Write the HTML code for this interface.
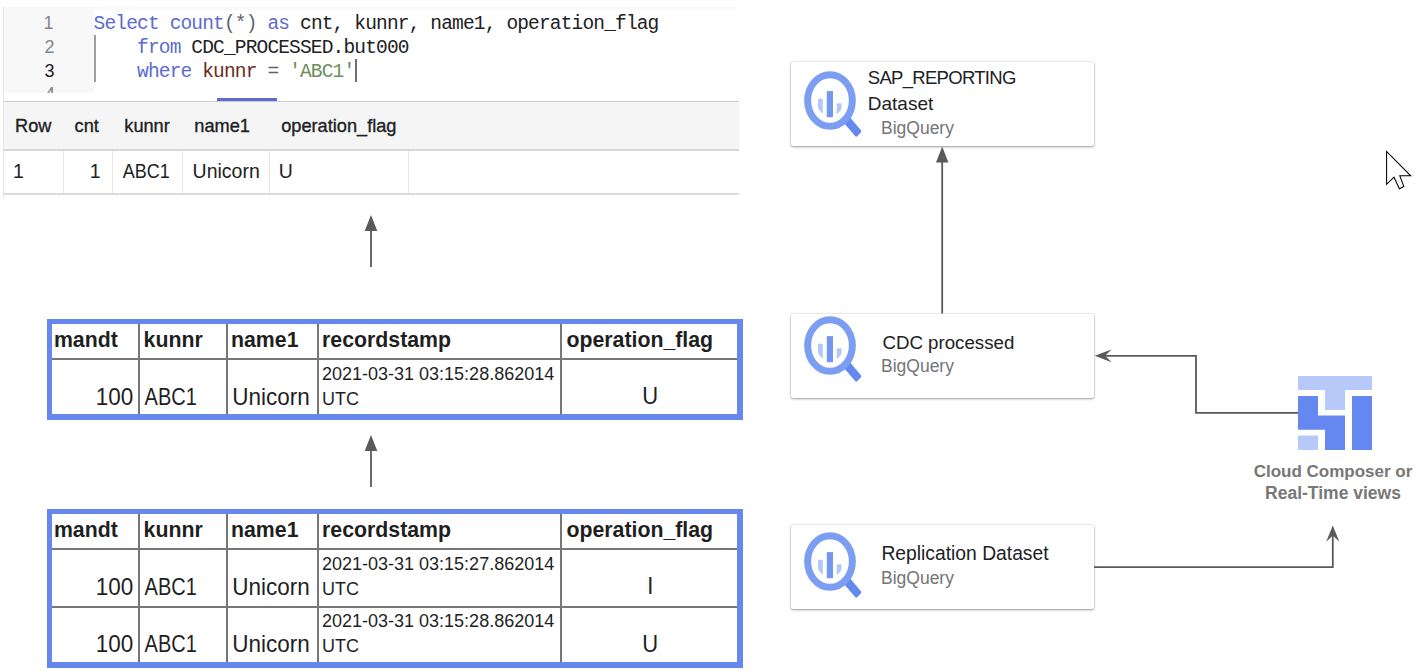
<!DOCTYPE html>
<html><head><meta charset="utf-8"><style>
html,body{margin:0;padding:0;background:#fff;width:1416px;height:671px;overflow:hidden;position:relative}
body>div,body>svg{position:absolute}
</style></head><body>
<div style="left:3px;top:7px;width:1px;height:191px;background:#e4e4e4;"></div>
<div style="left:4px;top:7px;width:90px;height:86px;background:#f8f8f8;"></div>
<div style="left:94px;top:7px;width:645px;height:3px;background:#fafafa;"></div>
<div style="left:23.6px;width:30px;text-align:right;top:11.66px;font-family:'Liberation Sans', sans-serif;font-size:18px;line-height:22px;color:#80868b;font-weight:400;white-space:pre;">1</div>
<div style="left:24.5px;width:30px;text-align:right;top:35.96px;font-family:'Liberation Sans', sans-serif;font-size:18px;line-height:22px;color:#80868b;font-weight:400;white-space:pre;">2</div>
<div style="left:24.5px;width:30px;text-align:right;top:59.76px;font-family:'Liberation Sans', sans-serif;font-size:18px;line-height:22px;color:#202124;font-weight:400;white-space:pre;">3</div>
<div style="left:25px;top:86px;width:30px;height:7px;overflow:hidden"><div style="position:absolute;left:0;top:-2.4px;width:30px;text-align:right;font-family:'Liberation Sans', sans-serif;font-size:18px;line-height:20px;color:#80868b">4</div></div>
<div style="left:94px;top:35px;width:2px;height:47px;background:#9e9e9e;"></div>
<div style="left:93.6px;top:13.01px;font-family:'Liberation Mono', monospace;font-size:19.5px;line-height:23px;color:#202124;font-weight:400;white-space:pre;letter-spacing:-0.84px"><span style="color:#5c6bd0">Select</span><span style="color:#202124"> </span><span style="color:#5c6bd0">count</span><span style="color:#5f6368">(*)</span><span style="color:#202124"> </span><span style="color:#5c6bd0">as</span><span style="color:#202124"> cnt, kunnr, name1, operation_flag</span></div>
<div style="left:93.6px;top:36.71px;font-family:'Liberation Mono', monospace;font-size:19.5px;line-height:23px;color:#202124;font-weight:400;white-space:pre;letter-spacing:-0.84px"><span style="color:#202124">    </span><span style="color:#5c6bd0">from</span><span style="color:#202124"> CDC_PROCESSED.but000</span></div>
<div style="left:93.6px;top:61.31px;font-family:'Liberation Mono', monospace;font-size:19.5px;line-height:23px;color:#202124;font-weight:400;white-space:pre;letter-spacing:-0.84px"><span style="color:#202124">    </span><span style="color:#5c6bd0">where</span><span style="color:#202124"> </span><span style="color:#6a2d1c">kunnr</span><span style="color:#5f6368"> = </span><span style="color:#6a8f5a">'ABC1'</span></div>
<div style="left:355px;top:59px;width:2px;height:23px;background:#6f6f6f;"></div>
<div style="left:217px;top:98px;width:60px;height:3px;background:#5c6bd0;"></div>
<div style="left:4px;top:101px;width:735px;height:1px;background:#cdcdcd;"></div>
<div style="left:4px;top:102px;width:735px;height:47px;background:#f5f5f5;"></div>
<div style="left:4px;top:149px;width:735px;height:2px;background:#d6d6d6;"></div>
<div style="left:4px;top:193px;width:735px;height:2px;background:#dcdcdc;"></div>
<div style="left:63px;top:151px;width:1px;height:42px;background:#e6e6e6;"></div>
<div style="left:112px;top:151px;width:1px;height:42px;background:#e6e6e6;"></div>
<div style="left:182px;top:151px;width:1px;height:42px;background:#e6e6e6;"></div>
<div style="left:269px;top:151px;width:1px;height:42px;background:#e6e6e6;"></div>
<div style="left:408px;top:151px;width:1px;height:42px;background:#e6e6e6;"></div>
<div style="left:15px;top:115.19px;font-family:'Liberation Sans', sans-serif;font-size:18.2px;line-height:22px;color:#202124;font-weight:400;white-space:pre;-webkit-text-stroke:0.35px #202124">Row</div>
<div style="left:74.6px;top:115.19px;font-family:'Liberation Sans', sans-serif;font-size:18.2px;line-height:22px;color:#202124;font-weight:400;white-space:pre;-webkit-text-stroke:0.35px #202124">cnt</div>
<div style="left:124.3px;top:115.19px;font-family:'Liberation Sans', sans-serif;font-size:18.2px;line-height:22px;color:#202124;font-weight:400;white-space:pre;-webkit-text-stroke:0.35px #202124">kunnr</div>
<div style="left:194.3px;top:115.19px;font-family:'Liberation Sans', sans-serif;font-size:18.2px;line-height:22px;color:#202124;font-weight:400;white-space:pre;-webkit-text-stroke:0.35px #202124">name1</div>
<div style="left:281.2px;top:115.19px;font-family:'Liberation Sans', sans-serif;font-size:18.2px;line-height:22px;color:#202124;font-weight:400;white-space:pre;-webkit-text-stroke:0.35px #202124">operation_flag</div>
<div style="left:13px;top:159.54px;font-family:'Liberation Sans', sans-serif;font-size:19.5px;line-height:23px;color:#202124;font-weight:400;white-space:pre;">1</div>
<div style="left:60.5px;width:40px;text-align:right;top:159.54px;font-family:'Liberation Sans', sans-serif;font-size:19.5px;line-height:23px;color:#202124;font-weight:400;white-space:pre;">1</div>
<div style="left:122.8px;top:160.56px;font-family:'Liberation Sans', sans-serif;font-size:18px;line-height:22px;color:#202124;font-weight:400;white-space:pre;transform:scaleY(1.1);transform-origin:0 17.24px;">ABC1</div>
<div style="left:192.6px;top:159.54px;font-family:'Liberation Sans', sans-serif;font-size:19.5px;line-height:23px;color:#202124;font-weight:400;white-space:pre;">Unicorn</div>
<div style="left:278.8px;top:159.54px;font-family:'Liberation Sans', sans-serif;font-size:19.5px;line-height:23px;color:#202124;font-weight:400;white-space:pre;">U</div>
<svg style="left:0;top:0" width="1416" height="671"><path d="M371 215 L364.7 231 L377.3 231 Z" fill="#595959"/><rect x="370.1" y="230" width="1.8" height="37" fill="#595959"/></svg>
<svg style="left:0;top:0" width="1416" height="671"><path d="M371 435 L364.7 451 L377.3 451 Z" fill="#595959"/><rect x="370.1" y="450" width="1.8" height="37" fill="#595959"/></svg>
<div style="left:137.5px;top:324px;width:2px;height:90px;background:#777777;"></div>
<div style="left:226px;top:324px;width:2px;height:90px;background:#777777;"></div>
<div style="left:316.5px;top:324px;width:2px;height:90px;background:#777777;"></div>
<div style="left:560px;top:324px;width:2px;height:90px;background:#777777;"></div>
<div style="left:52px;top:358px;width:686px;height:2px;background:#777777;"></div>
<div style="left:47px;top:319px;width:695.6px;height:5px;background:#6688ee;"></div>
<div style="left:47px;top:414px;width:695.6px;height:5.6px;background:#6688ee;"></div>
<div style="left:47px;top:319px;width:5px;height:100.6px;background:#6688ee;"></div>
<div style="left:737.2px;top:319px;width:5.4px;height:100.6px;background:#6688ee;"></div>
<div style="left:53.9px;top:326.62px;font-family:'Liberation Sans', sans-serif;font-size:21.3px;line-height:26px;color:#1f1f1f;font-weight:700;white-space:pre;">mandt</div>
<div style="left:143.6px;top:326.62px;font-family:'Liberation Sans', sans-serif;font-size:21.3px;line-height:26px;color:#1f1f1f;font-weight:700;white-space:pre;">kunnr</div>
<div style="left:231px;top:326.62px;font-family:'Liberation Sans', sans-serif;font-size:21.3px;line-height:26px;color:#1f1f1f;font-weight:700;white-space:pre;">name1</div>
<div style="left:322px;top:326.62px;font-family:'Liberation Sans', sans-serif;font-size:21.3px;line-height:26px;color:#1f1f1f;font-weight:700;white-space:pre;">recordstamp</div>
<div style="left:566.4px;top:326.62px;font-family:'Liberation Sans', sans-serif;font-size:21.3px;line-height:26px;color:#1f1f1f;font-weight:700;white-space:pre;">operation_flag</div>
<div style="left:53.19999999999999px;width:80px;text-align:right;top:383.70px;font-family:'Liberation Sans', sans-serif;font-size:22.5px;line-height:27px;color:#1f1f1f;font-weight:400;white-space:pre;transform:scaleY(1.08);transform-origin:0 21.30px;">100</div>
<div style="left:144.6px;top:386.07px;font-family:'Liberation Sans', sans-serif;font-size:20px;line-height:24px;color:#1f1f1f;font-weight:400;white-space:pre;transform:scaleY(1.16);transform-origin:0 18.93px;">ABC1</div>
<div style="left:232.3px;top:383.70px;font-family:'Liberation Sans', sans-serif;font-size:22.5px;line-height:27px;color:#1f1f1f;font-weight:400;white-space:pre;transform:scaleY(1.06);transform-origin:0 21.30px;">Unicorn</div>
<div style="left:322px;top:362.76px;font-family:'Liberation Sans', sans-serif;font-size:18px;line-height:22px;color:#1f1f1f;font-weight:400;white-space:pre;">2021-03-31 03:15:28.862014</div>
<div style="left:322px;top:387.76px;font-family:'Liberation Sans', sans-serif;font-size:18px;line-height:22px;color:#1f1f1f;font-weight:400;white-space:pre;">UTC</div>
<div style="left:600.3px;width:100px;text-align:center;top:384.37px;font-family:'Liberation Sans', sans-serif;font-size:22px;line-height:26px;color:#1f1f1f;font-weight:400;white-space:pre;transform:scaleY(1.08);transform-origin:0 20.63px;">U</div>
<div style="left:137.5px;top:514px;width:2px;height:148px;background:#777777;"></div>
<div style="left:226px;top:514px;width:2px;height:148px;background:#777777;"></div>
<div style="left:316.5px;top:514px;width:2px;height:148px;background:#777777;"></div>
<div style="left:560px;top:514px;width:2px;height:148px;background:#777777;"></div>
<div style="left:52px;top:548px;width:686px;height:2px;background:#777777;"></div>
<div style="left:52px;top:606px;width:686px;height:2px;background:#777777;"></div>
<div style="left:47px;top:509px;width:695.6px;height:5px;background:#6688ee;"></div>
<div style="left:47px;top:662px;width:695.6px;height:5.6px;background:#6688ee;"></div>
<div style="left:47px;top:509px;width:5px;height:158.6px;background:#6688ee;"></div>
<div style="left:737.2px;top:509px;width:5.4px;height:158.6px;background:#6688ee;"></div>
<div style="left:53.9px;top:516.62px;font-family:'Liberation Sans', sans-serif;font-size:21.3px;line-height:26px;color:#1f1f1f;font-weight:700;white-space:pre;">mandt</div>
<div style="left:143.6px;top:516.62px;font-family:'Liberation Sans', sans-serif;font-size:21.3px;line-height:26px;color:#1f1f1f;font-weight:700;white-space:pre;">kunnr</div>
<div style="left:231px;top:516.62px;font-family:'Liberation Sans', sans-serif;font-size:21.3px;line-height:26px;color:#1f1f1f;font-weight:700;white-space:pre;">name1</div>
<div style="left:322px;top:516.62px;font-family:'Liberation Sans', sans-serif;font-size:21.3px;line-height:26px;color:#1f1f1f;font-weight:700;white-space:pre;">recordstamp</div>
<div style="left:566.4px;top:516.62px;font-family:'Liberation Sans', sans-serif;font-size:21.3px;line-height:26px;color:#1f1f1f;font-weight:700;white-space:pre;">operation_flag</div>
<div style="left:53.19999999999999px;width:80px;text-align:right;top:573.70px;font-family:'Liberation Sans', sans-serif;font-size:22.5px;line-height:27px;color:#1f1f1f;font-weight:400;white-space:pre;transform:scaleY(1.08);transform-origin:0 21.30px;">100</div>
<div style="left:144.6px;top:576.07px;font-family:'Liberation Sans', sans-serif;font-size:20px;line-height:24px;color:#1f1f1f;font-weight:400;white-space:pre;transform:scaleY(1.16);transform-origin:0 18.93px;">ABC1</div>
<div style="left:232.3px;top:573.70px;font-family:'Liberation Sans', sans-serif;font-size:22.5px;line-height:27px;color:#1f1f1f;font-weight:400;white-space:pre;transform:scaleY(1.06);transform-origin:0 21.30px;">Unicorn</div>
<div style="left:322px;top:552.76px;font-family:'Liberation Sans', sans-serif;font-size:18px;line-height:22px;color:#1f1f1f;font-weight:400;white-space:pre;">2021-03-31 03:15:27.862014</div>
<div style="left:322px;top:577.76px;font-family:'Liberation Sans', sans-serif;font-size:18px;line-height:22px;color:#1f1f1f;font-weight:400;white-space:pre;">UTC</div>
<div style="left:600.3px;width:100px;text-align:center;top:574.37px;font-family:'Liberation Sans', sans-serif;font-size:22px;line-height:26px;color:#1f1f1f;font-weight:400;white-space:pre;transform:scaleY(1.08);transform-origin:0 20.63px;">I</div>
<div style="left:53.19999999999999px;width:80px;text-align:right;top:631.00px;font-family:'Liberation Sans', sans-serif;font-size:22.5px;line-height:27px;color:#1f1f1f;font-weight:400;white-space:pre;transform:scaleY(1.08);transform-origin:0 21.30px;">100</div>
<div style="left:144.6px;top:633.37px;font-family:'Liberation Sans', sans-serif;font-size:20px;line-height:24px;color:#1f1f1f;font-weight:400;white-space:pre;transform:scaleY(1.16);transform-origin:0 18.93px;">ABC1</div>
<div style="left:232.3px;top:631.00px;font-family:'Liberation Sans', sans-serif;font-size:22.5px;line-height:27px;color:#1f1f1f;font-weight:400;white-space:pre;transform:scaleY(1.06);transform-origin:0 21.30px;">Unicorn</div>
<div style="left:322px;top:610.06px;font-family:'Liberation Sans', sans-serif;font-size:18px;line-height:22px;color:#1f1f1f;font-weight:400;white-space:pre;">2021-03-31 03:15:28.862014</div>
<div style="left:322px;top:635.06px;font-family:'Liberation Sans', sans-serif;font-size:18px;line-height:22px;color:#1f1f1f;font-weight:400;white-space:pre;">UTC</div>
<div style="left:600.3px;width:100px;text-align:center;top:631.67px;font-family:'Liberation Sans', sans-serif;font-size:22px;line-height:26px;color:#1f1f1f;font-weight:400;white-space:pre;transform:scaleY(1.08);transform-origin:0 20.63px;">U</div>
<div style="left:791px;top:62px;width:303px;height:84px;background:#fff;border-radius:2px;box-shadow:0 1px 2px rgba(0,0,0,0.28),0 1px 4px rgba(0,0,0,0.10),0 0 0 1px rgba(0,0,0,0.05)"></div>
<svg style="left:798.2px;top:67.8px" width="70" height="72" viewBox="0 0 70 72"><defs><clipPath id="c70"><ellipse cx="32" cy="34.7" rx="12.8" ry="13.3"/></clipPath></defs><path d="M49.2 45.9 L62.9 62.2 Q63.8 63.4 62.8 64.6 L59.2 68.3 Q58 69.3 57.1 68.1 L44 52.7 Z" fill="#6388f0"/><ellipse cx="32" cy="32.5" rx="22.35" ry="25.75" fill="none" stroke="#7b9ef2" stroke-width="7"/><g clip-path="url(#c70)"><rect x="20" y="30.8" width="4.8" height="30" fill="#b3c8fa"/><rect x="38.7" y="35.3" width="4.8" height="30" fill="#b3c8fa"/></g><rect x="28.8" y="23.1" width="6.2" height="26.1" fill="#7397f1"/></svg>
<div style="left:867.8px;top:66.89px;font-family:'Liberation Sans', sans-serif;font-size:18.5px;line-height:22px;color:#202124;font-weight:400;white-space:pre;letter-spacing:-0.7px">SAP_REPORTING</div>
<div style="left:867.8px;top:91.91px;font-family:'Liberation Sans', sans-serif;font-size:19px;line-height:23px;color:#202124;font-weight:400;white-space:pre;">Dataset</div>
<div style="left:881px;top:117.73px;font-family:'Liberation Sans', sans-serif;font-size:17.5px;line-height:21px;color:#757575;font-weight:400;white-space:pre;">BigQuery</div>
<div style="left:791px;top:314px;width:303px;height:84px;background:#fff;border-radius:2px;box-shadow:0 1px 2px rgba(0,0,0,0.28),0 1px 4px rgba(0,0,0,0.10),0 0 0 1px rgba(0,0,0,0.05)"></div>
<svg style="left:798.1px;top:313.4px" width="70" height="72" viewBox="0 0 70 72"><defs><clipPath id="c316"><ellipse cx="32" cy="34.7" rx="12.8" ry="13.3"/></clipPath></defs><path d="M49.2 45.9 L62.9 62.2 Q63.8 63.4 62.8 64.6 L59.2 68.3 Q58 69.3 57.1 68.1 L44 52.7 Z" fill="#6388f0"/><ellipse cx="32" cy="32.5" rx="22.35" ry="25.75" fill="none" stroke="#7b9ef2" stroke-width="7"/><g clip-path="url(#c316)"><rect x="20" y="30.8" width="4.8" height="30" fill="#b3c8fa"/><rect x="38.7" y="35.3" width="4.8" height="30" fill="#b3c8fa"/></g><rect x="28.8" y="23.1" width="6.2" height="26.1" fill="#7397f1"/></svg>
<div style="left:882.4px;top:331.52px;font-family:'Liberation Sans', sans-serif;font-size:18.7px;line-height:22px;color:#202124;font-weight:400;white-space:pre;">CDC processed</div>
<div style="left:881px;top:356.13px;font-family:'Liberation Sans', sans-serif;font-size:17.5px;line-height:21px;color:#757575;font-weight:400;white-space:pre;">BigQuery</div>
<div style="left:791px;top:525px;width:303px;height:84px;background:#fff;border-radius:2px;box-shadow:0 1px 2px rgba(0,0,0,0.28),0 1px 4px rgba(0,0,0,0.10),0 0 0 1px rgba(0,0,0,0.05)"></div>
<svg style="left:798.2px;top:529.4px" width="70" height="72" viewBox="0 0 70 72"><defs><clipPath id="c532"><ellipse cx="32" cy="34.7" rx="12.8" ry="13.3"/></clipPath></defs><path d="M49.2 45.9 L62.9 62.2 Q63.8 63.4 62.8 64.6 L59.2 68.3 Q58 69.3 57.1 68.1 L44 52.7 Z" fill="#6388f0"/><ellipse cx="32" cy="32.5" rx="22.35" ry="25.75" fill="none" stroke="#7b9ef2" stroke-width="7"/><g clip-path="url(#c532)"><rect x="20" y="30.8" width="4.8" height="30" fill="#b3c8fa"/><rect x="38.7" y="35.3" width="4.8" height="30" fill="#b3c8fa"/></g><rect x="28.8" y="23.1" width="6.2" height="26.1" fill="#7397f1"/></svg>
<div style="left:881.4px;top:541.81px;font-family:'Liberation Sans', sans-serif;font-size:19.3px;line-height:23px;color:#202124;font-weight:400;white-space:pre;">Replication Dataset</div>
<div style="left:881px;top:568.03px;font-family:'Liberation Sans', sans-serif;font-size:17.5px;line-height:21px;color:#757575;font-weight:400;white-space:pre;">BigQuery</div>
<svg style="left:0;top:0" width="1416" height="671"><path d="M942.2 146.5 L936 162.5 L948.4 162.5 Z" fill="#595959"/><rect x="941.3" y="162" width="1.8" height="151.5" fill="#595959"/><path d="M1298 412.9 H1196 V355.8 H1104" fill="none" stroke="#595959" stroke-width="1.8"/><path d="M1094.8 355.8 L1111.6 349.4 L1105 355.8 L1111.6 362.2 Z" fill="#595959"/><path d="M1094 567.2 H1332.8 V532" fill="none" stroke="#595959" stroke-width="1.8"/><path d="M1332.8 525.5 L1326.2 541.8 L1332.8 535.5 L1339.4 541.8 Z" fill="#595959"/><rect x="1298" y="376" width="74" height="14" fill="#b7c9f8"/><rect x="1325" y="390" width="20" height="20" fill="#b7c9f8"/><rect x="1298" y="435.5" width="20" height="14.5" fill="#b7c9f8"/><path d="M1298 396 H1318 V415.6 H1345 V450 H1325 V429.7 H1298 Z" fill="#6488f0"/><rect x="1352" y="396" width="20" height="54" fill="#6488f0"/><path d="M1386.6 151.5 L1386.6 184.3 L1394 177.2 L1399.4 188.8 L1403.8 186.4 L1399.8 175.8 L1410.7 175.8 Z" fill="#fff" stroke="#000" stroke-width="1.05" stroke-linejoin="miter" stroke-miterlimit="3"/></svg>
<div style="left:1233.0px;width:200px;text-align:center;top:461.81px;font-family:'Liberation Sans', sans-serif;font-size:17px;line-height:20px;color:#777777;font-weight:700;white-space:pre;">Cloud Composer or</div>
<div style="left:1233.0px;width:200px;text-align:center;top:483.03px;font-family:'Liberation Sans', sans-serif;font-size:17.5px;line-height:21px;color:#777777;font-weight:700;white-space:pre;">Real-Time views</div>
</body></html>
